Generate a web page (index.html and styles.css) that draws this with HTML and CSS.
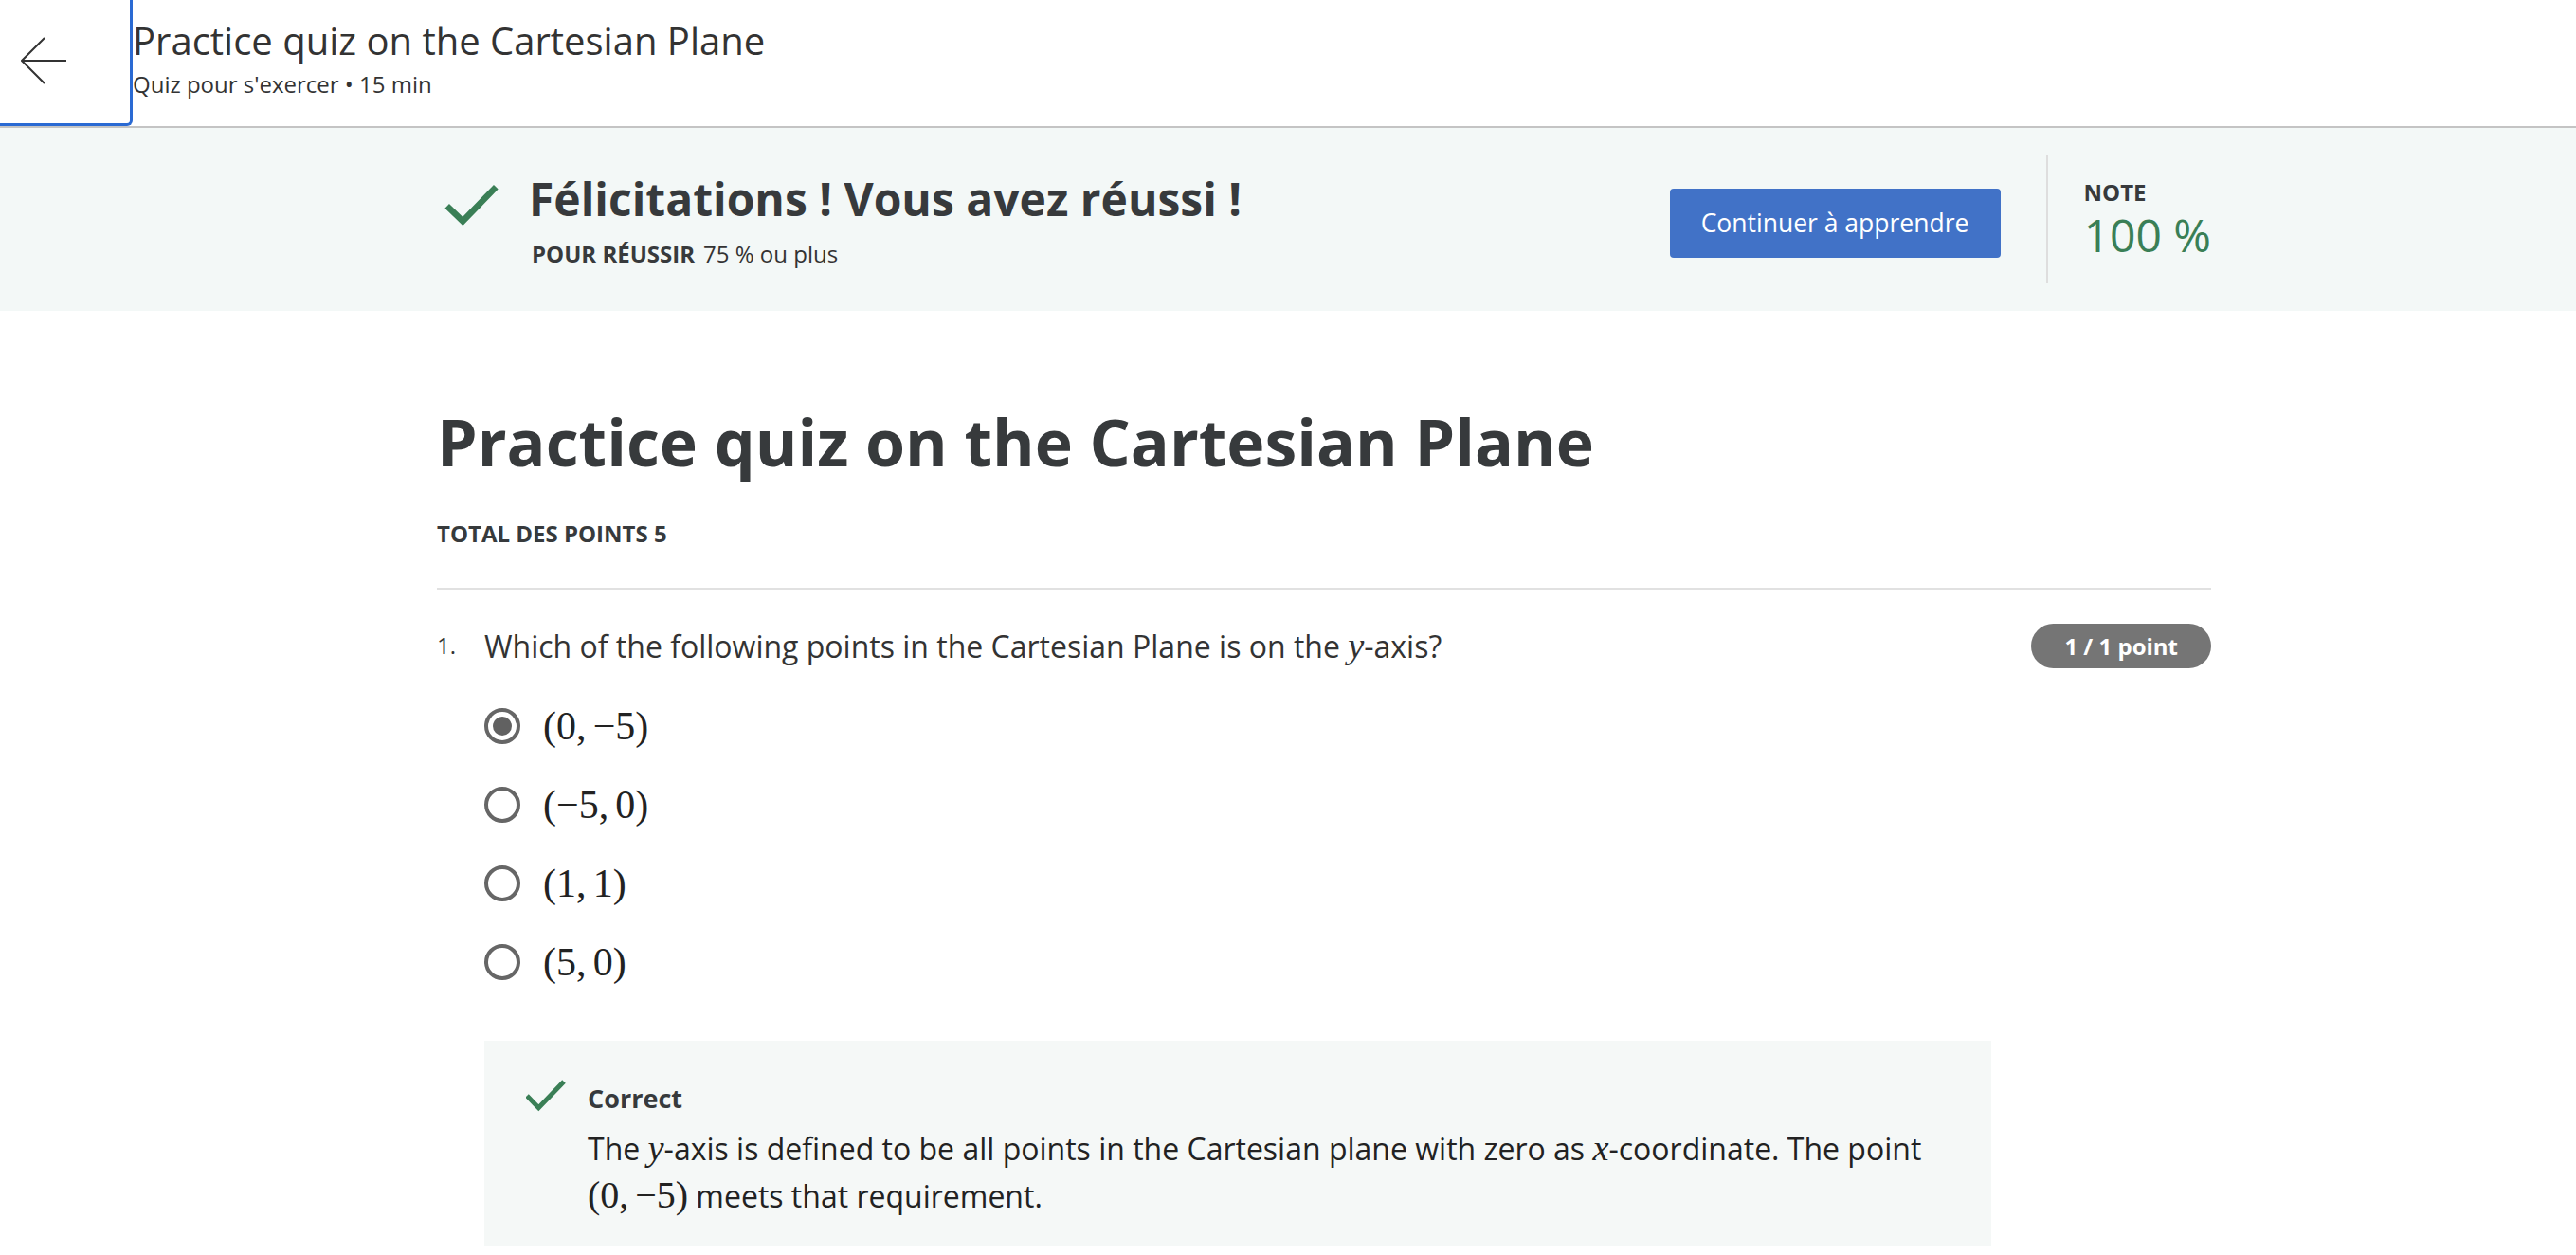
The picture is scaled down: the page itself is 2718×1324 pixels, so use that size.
FILE: index.html
```html
<!DOCTYPE html>
<html lang="fr">
<head>
<meta charset="utf-8">
<title>Practice quiz on the Cartesian Plane</title>
<link rel="stylesheet" href="styles.css">
</head>
<body>
<header class="topbar">
  <button class="back" aria-label="Retour">
    <svg class="back-icon" width="50" height="52" viewBox="0 0 50 52"><path d="M48 25H1M25 1L1 25L25 49" fill="none" stroke="#333" stroke-width="2"/></svg>
  </button>
  <div class="titles">
    <div class="t1">Practice quiz on the Cartesian Plane</div>
    <div class="t2">Quiz pour s'exercer • 15 min</div>
  </div>
</header>

<section class="banner">
  <div class="banner-inner">
    <div class="result">
      <svg class="result-check" width="62" height="46" viewBox="0 0 62 46"><path d="M5.7 25.3L22.3 41.3L57.3 5.3" fill="none" stroke="#3a7f56" stroke-width="6.5"/></svg>
      <div class="result-text">
        <h2>Félicitations ! Vous avez réussi !</h2>
        <p><b>POUR RÉUSSIR</b>75 % ou plus</p>
      </div>
    </div>
    <button class="continue">Continuer à apprendre</button>
    <div class="divider"></div>
    <div class="grade">
      <div class="grade-label">NOTE</div>
      <div class="grade-value">100 %</div>
    </div>
  </div>
</section>

<main class="content">
  <h1>Practice quiz on the Cartesian Plane</h1>
  <div class="total">TOTAL DES POINTS 5</div>
  <hr class="rule">
  <div class="question">
    <div class="qhead">
      <span class="num">1.</span>
      <p class="qtext">Which of the following points in the Cartesian Plane is on the <span class="mi">y</span>-axis?</p>
      <span class="badge">1 / 1 point</span>
    </div>
    <ul class="options">
      <li class="option"><span class="radio checked"></span><span class="math">(0,<span class="thin"></span>−5)</span></li>
      <li class="option"><span class="radio"></span><span class="math">(−5,<span class="thin"></span>0)</span></li>
      <li class="option"><span class="radio"></span><span class="math">(1,<span class="thin"></span>1)</span></li>
      <li class="option"><span class="radio"></span><span class="math">(5,<span class="thin"></span>0)</span></li>
    </ul>
    <div class="feedback">
      <svg class="fb-check" width="44" height="36" viewBox="0 0 44 36"><path d="M1 19L13.3 31.7L40 4" fill="none" stroke="#3a7f56" stroke-width="5"/></svg>
      <div class="fb-body">
        <div class="fb-title">Correct</div>
        <p class="fb-text">The <span class="mi">y</span>-axis is defined to be all points in the Cartesian plane with zero as <span class="mi">x</span>-coordinate. The point <span class="math inline">(0,<span class="thin"></span>−5)</span> meets that requirement.</p>
      </div>
    </div>
  </div>
</main>
</body>
</html>
```

FILE: styles.css
```css
body {
  margin: 0;
  font-family: "Open Sans", "Liberation Sans", sans-serif;
  color: #333;
  background: #fff;
}

.topbar {
  display: flex;
  align-items: flex-start;
  height: 133px;
  border-bottom: 2px solid #c4c4c4;
}

.back {
  width: 140px;
  height: 133px;
  box-sizing: border-box;
  border: 0;
  border-right: 3px solid #2a6ad3;
  border-bottom: 3px solid #2a6ad3;
  border-bottom-right-radius: 6px;
  background: #fff;
  padding: 0 0 0 22px;
  display: flex;
  align-items: center;
}

.titles {
  padding-top: 19px;
}

.t1 {
  font-size: 40px;
  line-height: 48px;
  color: #333;
}

.t2 {
  font-size: 24px;
  line-height: 30px;
  margin-top: 7px;
  color: #333;
}

.banner {
  background: #f3f8f7;
  height: 193px;
}

.banner-inner {
  margin-left: 461px;
  width: 1872px;
  height: 100%;
  display: flex;
  align-items: center;
}

.result {
  flex: 1;
  display: flex;
  align-items: flex-start;
}

.result-check {
  margin: 12px 30px 0 5px;
  flex: none;
}

.result-text h2 {
  margin: 0;
  font-size: 48px;
  line-height: 60px;
  font-weight: 700;
  color: #373a3c;
}

.result-text p {
  margin: 12px 0 0 3px;
  font-size: 24px;
  line-height: 32px;
  color: #333;
}

.result-text b {
  margin-right: 9px;
  color: #373a3c;
}

.continue {
  width: 349px;
  height: 73px;
  margin-top: 7px;
  background: #4172c7;
  color: #fff;
  border: 0;
  border-radius: 4px;
  font-family: "Open Sans", sans-serif;
  font-size: 26.5px;
  font-weight: 400;
}

.divider {
  width: 2px;
  height: 135px;
  background: #dedede;
  margin: 0 38px 0 48px;
}

.grade {
  white-space: nowrap;
}

.grade-label {
  font-size: 24px;
  line-height: 30px;
  font-weight: 700;
  color: #373a3c;
}

.grade-value {
  margin-top: 2px;
  font-size: 48px;
  line-height: 56px;
  color: #3a7f56;
}

.content {
  margin-left: 461px;
  width: 1872px;
  padding-top: 95px;
}

h1 {
  margin: 0;
  font-size: 68px;
  line-height: 85px;
  font-weight: 700;
  color: #373a3c;
}

.total {
  margin-top: 40px;
  font-size: 24px;
  line-height: 30px;
  font-weight: 700;
  color: #373a3c;
}

.rule {
  border: 0;
  height: 2px;
  background: #e1e1e1;
  margin: 42px 0 0;
}

.question {
  margin-top: 36px;
}

.qhead {
  display: flex;
  align-items: flex-start;
}

.num {
  width: 50px;
  font-size: 24px;
  line-height: 45px;
}

.qtext {
  flex: 1;
  margin: 0;
  font-size: 32px;
  line-height: 47px;
}

.mi {
  font-family: "Liberation Serif", serif;
  font-style: italic;
  font-size: 1.2em;
  line-height: 0;
}

.badge {
  height: 47px;
  line-height: 47px;
  padding: 0 35px;
  border-radius: 24px;
  background: #757575;
  color: #fff;
  font-size: 24px;
  font-weight: 700;
}

.options {
  list-style: none;
  margin: 36px 0 0;
  padding: 0 0 0 50px;
  display: flex;
  flex-direction: column;
  gap: 33px;
}

.option {
  display: flex;
  align-items: center;
  height: 50px;
  gap: 24px;
}

.radio {
  width: 38px;
  height: 38px;
  box-sizing: border-box;
  border: 4px solid #666;
  border-radius: 50%;
  display: flex;
  align-items: center;
  justify-content: center;
}

.radio.checked::after {
  content: "";
  width: 20px;
  height: 20px;
  border-radius: 50%;
  background: #616161;
}

.math {
  font-family: "Liberation Serif", serif;
  font-size: 42px;
  color: #222;
}

.math.inline {
  font-size: 40px;
  line-height: 0;
}

.thin {
  display: inline-block;
  width: 0.17em;
}

.feedback {
  margin: 58px 0 0 50px;
  width: 1590px;
  box-sizing: border-box;
  background: #f5f8f7;
  padding: 43px 44px 28px 44px;
  display: flex;
  align-items: flex-start;
  gap: 21px;
}

.fb-check {
  flex: none;
  margin-top: -4px;
}

.fb-title {
  font-size: 27px;
  line-height: 36px;
  font-weight: 700;
  color: #373a3c;
}

.fb-text {
  margin: 10px 0 0;
  font-size: 32px;
  line-height: 50px;
  color: #222;
}
```
